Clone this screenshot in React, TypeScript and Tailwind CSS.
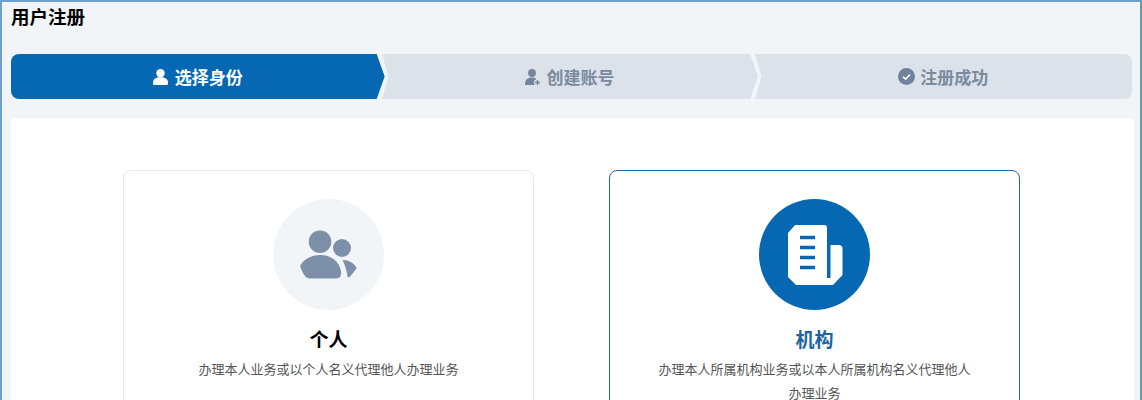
const font = { fontFamily: '"Noto Sans CJK SC", "Liberation Sans", sans-serif' };

function Chevron() {
  return (
    <svg width="12" height="45" viewBox="0 0 12 45" className="relative z-10 -ml-[8px] -mr-[4px] shrink-0">
      <polygon points="0,0 5,0 11.5,22.5 5,45 0,45 8,22.5" fill="#f3f6f9" />
    </svg>
  );
}

function UserIcon() {
  return (
    <svg width="15" height="16" viewBox="0 0 15 16" className="shrink-0">
      <circle cx="7.5" cy="4.2" r="4.2" fill="#fff" />
      <path d="M0 13.5C0 10 3 8.3 7.5 8.3S15 10 15 13.5V14.5Q15 16 13.5 16H1.5Q0 16 0 14.5Z" fill="#fff" />
    </svg>
  );
}

function UserPlusIcon() {
  return (
    <svg width="16" height="16" viewBox="0 0 16 16" className="shrink-0">
      <circle cx="7" cy="4" r="3.9" fill="#74869e" />
      <path d="M0 15.9C0 11 2.5 8.6 7 8.6c2 0 3.6.5 4.6 1.5C10 10.6 9 12 9 13.5c0 .9.3 1.7.8 2.4Z" fill="#74869e" />
      <path d="M12.5 11v5M10 13.5h5" stroke="#74869e" strokeWidth="1.4" />
    </svg>
  );
}

function CheckCircleIcon() {
  return (
    <svg width="17" height="17" viewBox="0 0 17 17" className="shrink-0">
      <circle cx="8.5" cy="8.5" r="8.5" fill="#6f839d" />
      <path d="M5 8.7l2.5 2.4L12 6.6" fill="none" stroke="#fff" strokeWidth="1.5" />
    </svg>
  );
}

function PeopleIcon() {
  return (
    <svg width="111" height="111" viewBox="0 0 111 111">
      <circle cx="47" cy="42.7" r="11.3" fill="#7e90a9" />
      <circle cx="69" cy="49" r="9" fill="#7e90a9" />
      <path d="M27 67C31 60 38 56 47 56C58 56 66 62 68 72Q69 79.5 63 79.5L37 79.5Q32 79.5 29 72Z" fill="#7e90a9" />
      <path d="M69.5 61C76 61 81 64 83.7 69C81 73 78.5 76 76.5 78Q75 79.5 74.5 77C73.5 71 72 66 69.5 61Z" fill="#7e90a9" />
    </svg>
  );
}

function OrgIcon() {
  return (
    <svg width="111" height="111" viewBox="0 0 111 111">
      <path d="M36 26H65Q68 26 68 29V86H37L29 78V34Z" fill="#fff" />
      <path d="M71.5 46H80Q83.5 46 83.5 49.5V76L74 86H66V79H71.5Z" fill="#fff" />
      <path d="M41 38.5H56M41 48.5H56M41 58.5H56M41 68.5H56" stroke="#0667b3" strokeWidth="3.4" />
    </svg>
  );
}

export default function App() {
  return (
    <div
      style={font}
      className="h-[400px] overflow-hidden border-2 border-b-0 border-t-[#6f9fcb] border-l-[#6f9fcb] border-r-[#5f9eab] bg-[#f2f5f8] pl-[9px] pr-[6px]"
    >
      <h1 className="mb-[24px] h-[28px] text-[18.5px] font-bold leading-[28px] text-black">用户注册</h1>

      <div className="mr-[2px] flex h-[45px] overflow-hidden rounded-lg bg-[#dce2e9] text-[17px] font-bold leading-none">
        <div className="flex flex-1 items-center justify-center bg-[#0667b3] text-white [clip-path:polygon(0_0,calc(100%-8px)_0,100%_50%,calc(100%-8px)_100%,0_100%)]">
          <div className="flex items-center gap-[7px]">
            <UserIcon />
            <span>选择身份</span>
          </div>
        </div>
        <Chevron />
        <div className="flex flex-1 items-center justify-center text-[#7a8a9f]">
          <div className="mr-[4px] flex items-center gap-[6px]">
            <UserPlusIcon />
            <span>创建账号</span>
          </div>
        </div>
        <Chevron />
        <div className="flex flex-1 items-center justify-center text-[#7a8a9f]">
          <div className="mr-[4px] flex items-center gap-[5px]">
            <CheckCircleIcon />
            <span>注册成功</span>
          </div>
        </div>
      </div>

      <div className="mt-[19px] rounded-t bg-white pb-10 pl-[112px] pt-[52px]">
        <div className="grid grid-cols-[411px_411px] gap-[75px]">
          <div className="h-[300px] rounded-lg border border-[#e4e7eb] px-12 pt-[28px] text-center">
            <div className="mx-auto h-[111px] w-[111px] rounded-full bg-[#f2f5f8]">
              <PeopleIcon />
            </div>
            <div className="mt-[15px] text-[19px] font-bold leading-[28px] text-black">个人</div>
            <p className="mt-[4px] text-[13px] leading-[24px] text-[#555]">办理本人业务或以个人名义代理他人办理业务</p>
          </div>
          <div className="h-[300px] rounded-lg border border-[#1d6aa8] px-12 pt-[28px] text-center">
            <div className="mx-auto h-[111px] w-[111px] rounded-full bg-[#0667b3]">
              <OrgIcon />
            </div>
            <div className="mt-[15px] text-[19px] font-bold leading-[28px] text-[#1a64a3]">机构</div>
            <p className="mt-[4px] text-[13px] leading-[24px] text-[#555]">办理本人所属机构业务或以本人所属机构名义代理他人办理业务</p>
          </div>
        </div>
      </div>
    </div>
  );
}
